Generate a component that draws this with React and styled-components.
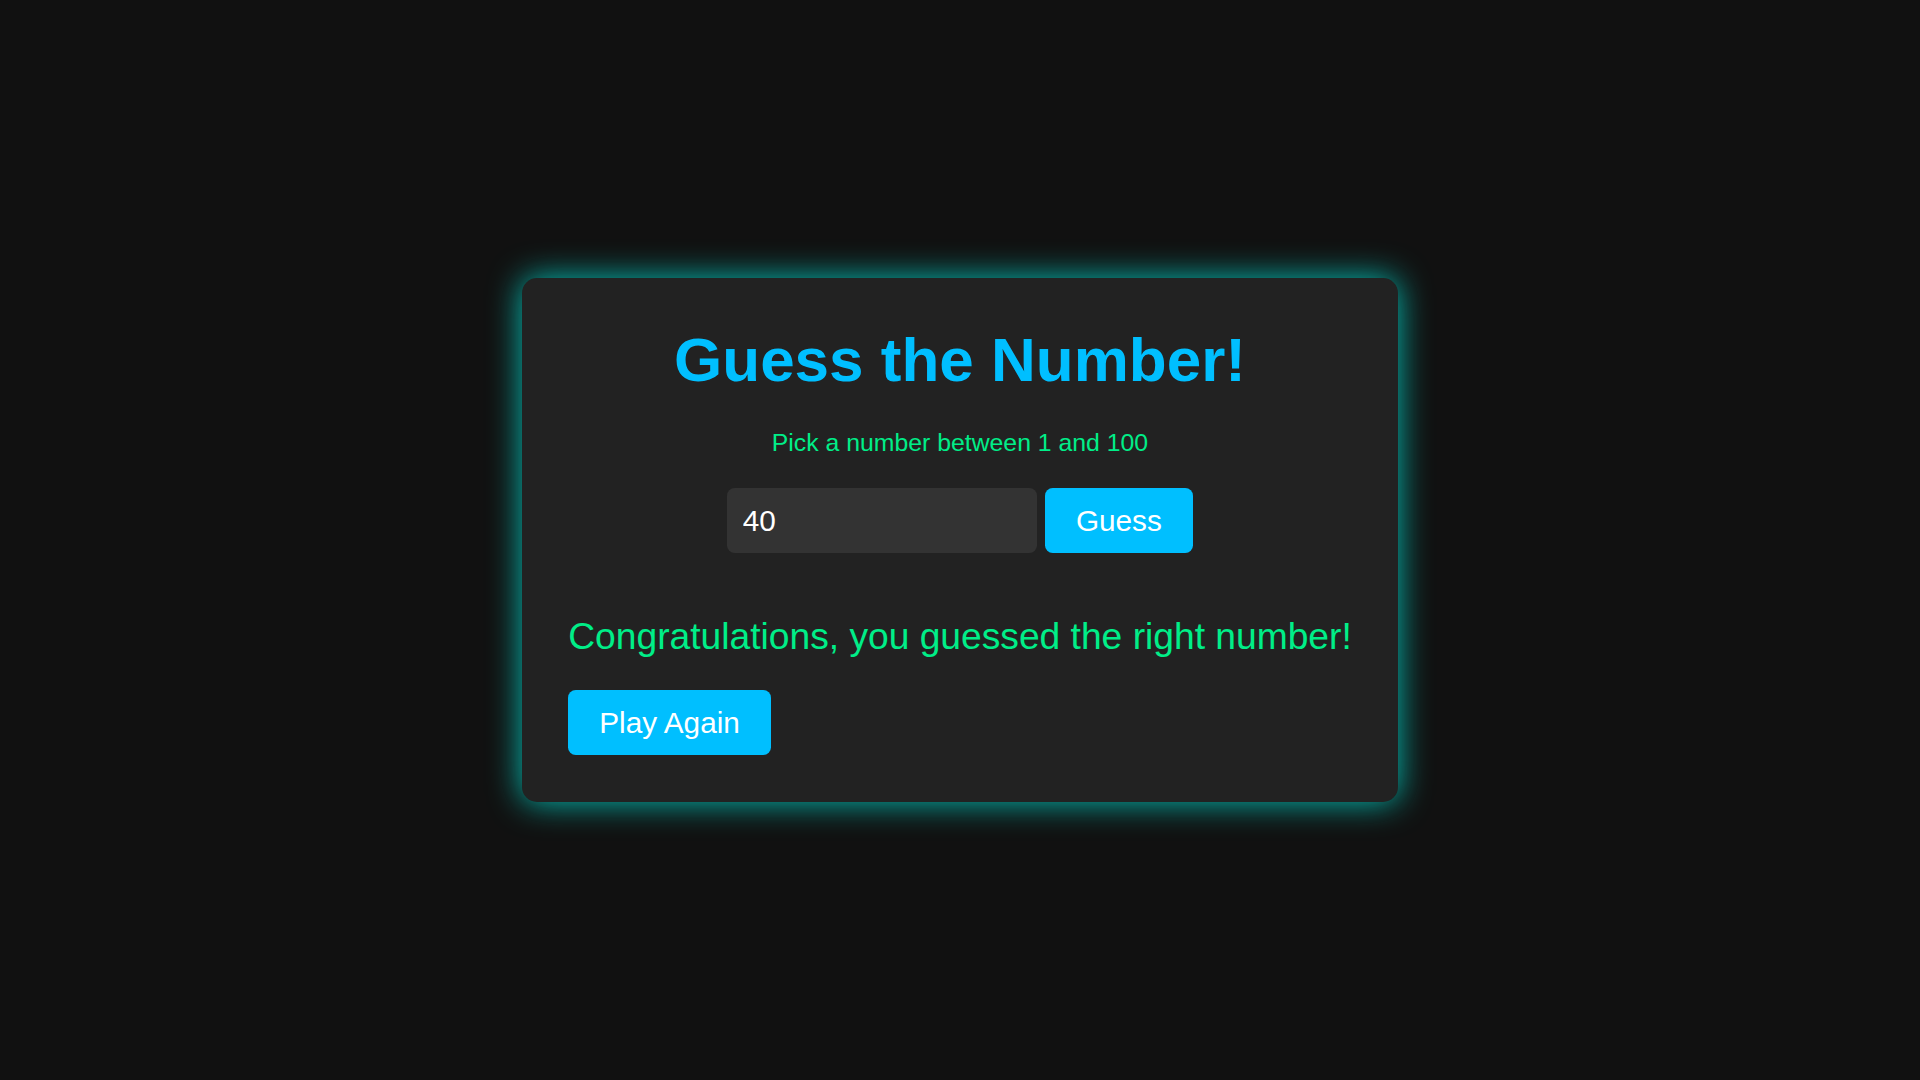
import React, { useState } from 'react';
import styled, { createGlobalStyle } from 'styled-components';

const GlobalStyle = createGlobalStyle`
  * { box-sizing: border-box; }
  body {
    margin: 0;
    background: #111111;
    font-family: "Liberation Sans", Arial, sans-serif;
  }
`;

const Page = styled.main`
  min-height: 100vh;
  display: flex;
  justify-content: center;
  align-items: center;
`;

const Card = styled.section`
  background: #222222;
  padding: 46.5px;
  border-radius: 15px;
  box-shadow: 0 0 33px rgba(0, 240, 228, 0.8);
  text-align: center;
`;

const Title = styled.h1`
  margin: 0 0 35px;
  font-size: 62px;
  line-height: 69px;
  font-weight: 700;
  color: #00bfff;
`;

const Hint = styled.p`
  margin: 0 0 31.5px;
  font-size: 24.8px;
  line-height: 27.7px;
  color: #00ee88;
`;

const GuessForm = styled.form`
  display: flex;
  justify-content: center;
  gap: 7.75px;
  margin-bottom: 62.5px;
`;

const NumberInput = styled.input`
  width: 310px;
  height: 65px;
  padding: 0 15.5px;
  border: none;
  border-radius: 7.75px;
  background: #333333;
  color: #ffffff;
  font-family: inherit;
  font-size: 29.76px;
  outline: none;
`;

const Button = styled.button`
  height: 65px;
  padding: 0 31px;
  border: none;
  border-radius: 7.75px;
  background: #00bfff;
  color: #ffffff;
  font-family: inherit;
  font-size: 29.76px;
  cursor: pointer;
`;

const Message = styled.p`
  margin: 0 0 33px;
  font-size: 37.2px;
  line-height: 41.5px;
  color: #00ee88;
  text-align: left;
`;

const Actions = styled.div`
  display: flex;
  justify-content: flex-start;
`;

export default function App() {
  const [guess, setGuess] = useState('40');

  return (
    <>
      <GlobalStyle />
      <Page>
        <Card>
          <Title>Guess the Number!</Title>
          <Hint>Pick a number between 1 and 100</Hint>
          <GuessForm onSubmit={(e) => e.preventDefault()}>
            <NumberInput
              type="number"
              value={guess}
              onChange={(e) => setGuess(e.target.value)}
            />
            <Button type="submit">Guess</Button>
          </GuessForm>
          <Message>Congratulations, you guessed the right number!</Message>
          <Actions>
            <Button type="button">Play Again</Button>
          </Actions>
        </Card>
      </Page>
    </>
  );
}
